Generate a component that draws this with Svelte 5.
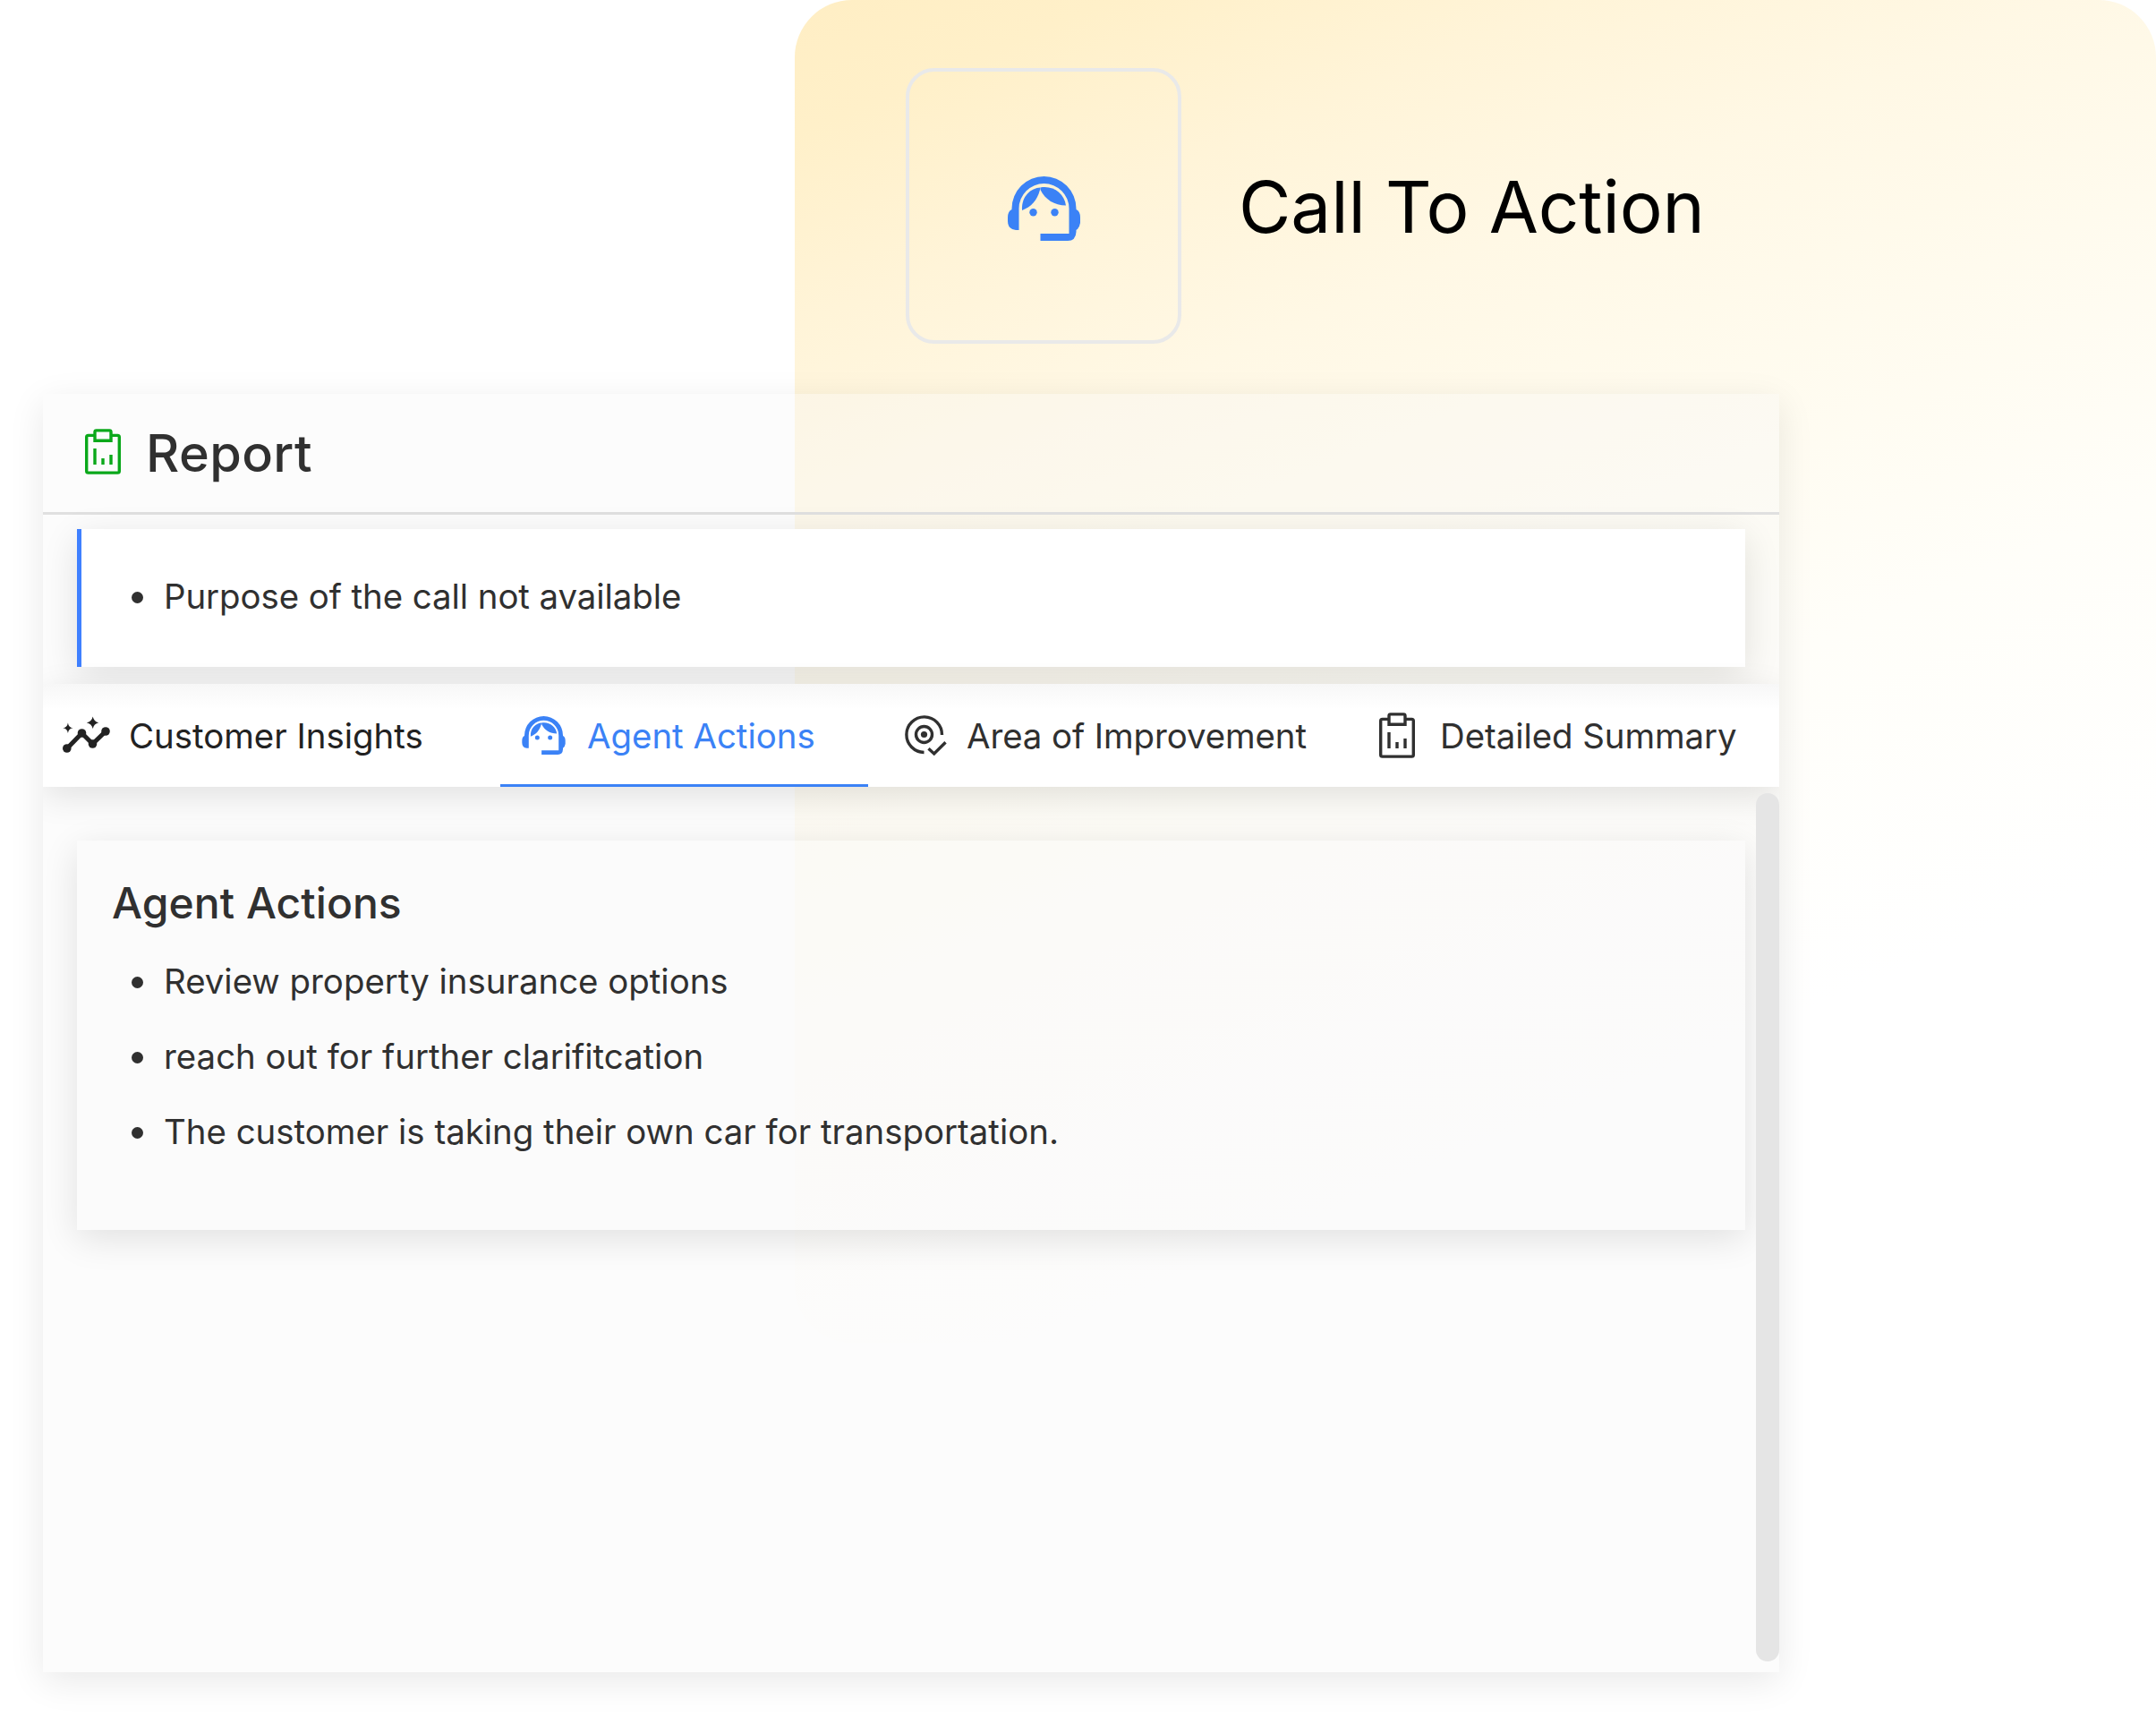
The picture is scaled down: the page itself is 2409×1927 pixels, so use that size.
<script>
  const tabs = [
    { label: 'Customer Insights', icon: 'insights' },
    { label: 'Agent Actions', icon: 'agent', active: true },
    { label: 'Area of Improvement', icon: 'target' },
    { label: 'Detailed Summary', icon: 'report' }
  ];
  const actions = [
    'Review property insurance options',
    'reach out for further clarifitcation',
    'The customer is taking their own car for transportation.'
  ];
</script>

{#snippet agent()}
  <svg class="icon agent" viewBox="0 0 81 72">
    <g fill="currentColor">
      <path d="M12.5 60H9Q0 59 0 50V46Q0 39 4.5 37V36A36 36 0 0 1 76.5 36V37Q81 39 81 46V52Q80 58 76.5 60V62Q76 72 67 72H36.5V64H68.5V36A28 28 0 0 0 12.5 36Z" />
      <path d="M16 38C15 22 26 13 36.5 12.5L36 15C33 27 26 34 16 38Z" />
      <path d="M36.5 12.5C51 10 63 19 65 32.5C52 32.5 42 26 36.5 15Z" />
      <circle cx="28.5" cy="40.3" r="4.2" /><circle cx="52.5" cy="40.3" r="4.2" />
    </g>
  </svg>
{/snippet}

{#snippet report()}
  <svg class="icon report" viewBox="0 0 40 51" fill="none" stroke="currentColor" stroke-width="3.4">
    <path d="M10 7.4H3.6Q1.7 7.4 1.7 9.3V47.2Q1.7 49.1 3.6 49.1H36.4Q38.3 49.1 38.3 47.2V9.3Q38.3 7.4 36.4 7.4H30" />
    <path d="M11 13.2V3.6Q11 1.9 12.7 1.9H27.3Q29 1.9 29 3.6V13.2Z" />
    <path d="M11 22V40M20 33V40M29 29V40" />
  </svg>
{/snippet}

<main class="page">
  <div class="backdrop"></div>

  <header class="hero">
    <div class="tile">{@render agent()}</div>
    <h1>Call To Action</h1>
  </header>

  <section class="panel">
    <div class="clip">
      <div class="panel-head">
        {@render report()}
        <h2>Report</h2>
      </div>

      <div class="purpose">
        <ul><li>Purpose of the call not available</li></ul>
      </div>

      <nav class="tabs">
        {#each tabs as tab}
          <div class="tab {tab.icon}" class:active={tab.active}>
            <span class="slot">
              {#if tab.icon === 'insights'}
                <svg class="icon spark" viewBox="0 0 53 41" fill="currentColor">
                  <path d="M5 36L21.5 19L33.5 31L48 17" fill="none" stroke="currentColor" stroke-width="5" />
                  <circle cx="4.8" cy="36" r="4.8" /><circle cx="21.5" cy="19" r="4.8" />
                  <circle cx="33.5" cy="31" r="4.8" /><circle cx="48" cy="17" r="4.8" />
                  <path d="M33.7 .5Q35 6.3 40.2 7.2Q35 8.5 33.7 14Q32.4 8.5 26.8 7.2Q32.4 6.3 33.7 .5Z" />
                  <path d="M5.9 7.5Q6.6 12.6 11.5 13.3Q6.6 14 5.9 19Q5.2 14 .3 13.3Q5.2 12.6 5.9 7.5Z" />
                </svg>
              {:else if tab.icon === 'agent'}
                {@render agent()}
              {:else if tab.icon === 'target'}
                <svg class="icon goal" viewBox="0 0 47 46" fill="none" stroke="currentColor" stroke-width="3.4">
                  <path d="M41.5 22A19.8 19.8 0 1 0 21.5 41.5" />
                  <circle cx="21.5" cy="21.5" r="9" />
                  <circle cx="21.5" cy="21.5" r="3.6" fill="currentColor" stroke="none" />
                  <path d="M26.5 37.3L32.7 43L45.5 30.2" />
                </svg>
              {:else}
                {@render report()}
              {/if}
            </span>
            <span class="label">{tab.label}</span>
          </div>
        {/each}
      </nav>

      <div class="body">
        <article class="card">
          <h3>Agent Actions</h3>
          <ul>
            {#each actions as action}<li>{action}</li>{/each}
          </ul>
        </article>
        <div class="scrollbar"></div>
      </div>
    </div>
  </section>
</main>

<style>
  :global(body) { background: #fff; }
  h1, h2, h3, ul { margin: 0; padding: 0; }
  .page {
    position: relative;
    box-sizing: border-box;
    width: 2409px;
    height: 1927px;
    overflow: hidden;
    font-family: Inter, sans-serif;
    color: #303030;
  }
  .backdrop {
    position: absolute;
    inset: 0 0 auto 888px;
    height: 1500px;
    border-radius: 64px;
    background: linear-gradient(157deg, #ffeec4 0%, #fff0c9 7%, #fff4d8 17%, #fff8e5 28%, #fffbee 40%, #fffef9 56%, #fff 75%);
  }
  .icon { display: block; flex: none; }
  .hero {
    position: relative;
    display: flex;
    align-items: center;
    gap: 64px;
    height: 308px;
    padding: 76px 0 0 1012px;
    margin-bottom: 56px;
  }
  .tile {
    box-sizing: border-box;
    width: 308px;
    height: 308px;
    border: 4px solid #e9e9e9;
    border-radius: 32px;
    display: flex;
    align-items: center;
    justify-content: center;
    color: #3b82f6;
    padding: 5px 0 0 1px;
  }
  .tile :global(.agent) { width: 81px; height: 72px; }
  h1 {
    padding-top: 2px;
    font-size: 80px;
    font-weight: 400;
    line-height: 100px;
    letter-spacing: -.1px;
    color: #000;
    white-space: nowrap;
  }
  .panel {
    position: relative;
    width: 1940px;
    height: 1428px;
    margin-left: 48px;
    background: rgba(246, 246, 246, .35);
    box-shadow: 0 10px 38px rgba(0, 0, 0, .09);
  }
  .clip { height: 100%; overflow: hidden; }
  .panel-head {
    box-sizing: border-box;
    height: 135px;
    padding-left: 47px;
    display: flex;
    align-items: center;
    gap: 28px;
    border-bottom: 3px solid #e0e0e0;
  }
  .panel-head :global(.report) { color: #0aa81a; width: 40px; height: 51px; margin-bottom: 3px; }
  h2 { font-size: 57.6px; font-weight: 500; line-height: 70px; letter-spacing: .4px; }
  .purpose {
    box-sizing: border-box;
    height: 154px;
    margin: 16px 38px 19px;
    border-left: 5px solid #3f80ff;
    background: #fff;
    box-shadow: 0 10px 38px rgba(0, 0, 0, .11);
    display: flex;
    align-items: center;
    padding: 0 0 4px 92px;
    letter-spacing: -.06px;
  }
  ul { list-style: none; }
  li { position: relative; font-size: 38.4px; line-height: 46px; white-space: nowrap; }
  li::before {
    content: '';
    position: absolute;
    left: -36px;
    top: 18px;
    width: 13px;
    height: 13px;
    border-radius: 50%;
    background: currentColor;
  }
  .tabs {
    height: 115px;
    display: flex;
    background: linear-gradient(#f7f7f7, #fff 28px);
    box-shadow: 0 10px 38px rgba(0, 0, 0, .11);
  }
  .tab {
    box-sizing: border-box;
    height: 115px;
    display: flex;
    align-items: center;
    padding-left: 22px;
    font-size: 38.4px;
    white-space: nowrap;
  }
  .slot { width: 74px; flex: none; }
  .insights { width: 511px; color: #222; }
  .agent.tab { width: 411px; }
  .agent .slot { width: 75px; padding-left: 2px; box-sizing: border-box; }
  .tab.target { width: 524px; padding-left: 41px; letter-spacing: -.08px; }
  .target .slot { width: 69px; }
  .tab.report { padding-left: 47px; letter-spacing: -.05px; }
  .tab.report .slot { width: 68px; }
  .active { color: #3b82f6; box-shadow: inset 0 -3px #3b82f6; }
  .slot :global(.spark) { width: 53px; height: 41px; margin-top: -3px; }
  .slot :global(.agent) { width: 49px; height: 43px; }
  .slot :global(.goal) { width: 47px; height: 46px; }
  .slot :global(.report) { width: 40px; height: 51px; }
  .body { display: flex; height: 989px; justify-content: space-between; }
  .card {
    box-sizing: border-box;
    width: 1864px;
    height: 435px;
    margin: 60px 0 0 38px;
    padding: 38px 39px;
    background: rgba(250, 250, 250, .35);
    box-shadow: 0 10px 38px rgba(0, 0, 0, .11);
  }
  h3 { font-size: 48px; font-weight: 500; line-height: 64px; letter-spacing: .05px; }
  .card ul { padding: 32px 0 0 58px; display: grid; gap: 38px; }
  .scrollbar { width: 26px; height: 970px; margin-top: 7px; border-radius: 13px; background: #e5e5e5; }
</style>
